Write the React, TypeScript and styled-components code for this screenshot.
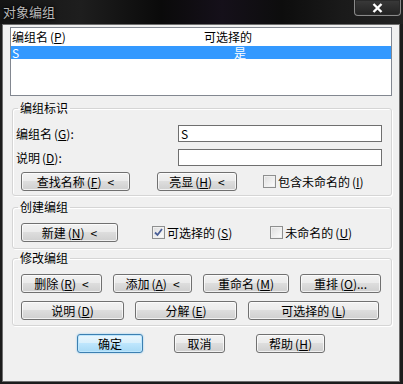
import React from "react"
import styled, { createGlobalStyle, css } from "styled-components"

const Global = createGlobalStyle`
  html, body {
    margin: 0;
    padding: 0;
    background: #000;
  }
  body {
    font-family: "Noto Sans CJK SC", "Noto Sans", sans-serif;
    font-size: 12px;
    color: #000;
  }
`

const Window = styled.div`
  width: 403px;
  height: 384px;
  display: flex;
  flex-direction: column;
  background: #1c1c1c;
  box-sizing: border-box;
  overflow: hidden;
`

const TitleBar = styled.div`
  height: 24px;
  flex: none;
  display: flex;
  align-items: flex-start;
  justify-content: space-between;
  background: linear-gradient(
    to right,
    #141414 0%,
    #1e1e1e 20%,
    #0a0a0a 40%,
    #15101a 55%,
    #0d0d0d 70%,
    #1a1a1a 85%,
    #222 100%
  );
`

const Title = styled.span`
  margin: 3px 0 0 3px;
  font-size: 13px;
  line-height: 18px;
  color: #b8b8b8;
  text-shadow: 0 0 4px #000, 0 0 2px #000;
`

const CloseButton = styled.div`
  width: 45px;
  height: 15px;
  margin-right: 2px;
  border: 1px solid #8a8a8a;
  border-top: none;
  border-radius: 0 0 4px 4px;
  box-shadow: inset 0 0 0 1px #2a2a2a;
  background: linear-gradient(to bottom, #3a3a3a, #222);
  display: flex;
  align-items: center;
  justify-content: center;
`

const Client = styled.div`
  flex: 1;
  margin: 0 3px 2px 2px;
  border: 1px solid #6e6e6e;
  background: #f0f0f0;
  padding: 2px 7px 0 7px;
  display: flex;
  flex-direction: column;
`

const ListBox = styled.div`
  height: 67px;
  border: 1px solid #828790;
  background: #fff;
  display: flex;
  flex-direction: column;
`

const ListRow = styled.div<{ $selected?: boolean; $header?: boolean }>`
  display: grid;
  grid-template-columns: 192px 1fr;
  height: ${(p) => (p.$header ? "18px" : "13px")};
  line-height: ${(p) => (p.$header ? "18px" : "13px")};
  padding-left: 1px;
  ${(p) =>
    p.$selected &&
    css`
      background: #3399ff;
      color: #fff;
    `}
`

const Cell = styled.span<{ $indent?: number }>`
  padding-left: ${(p) => p.$indent ?? 0}px;
  white-space: nowrap;
`

const Group = styled.fieldset<{ $top: number; $bottom: number }>`
  margin: ${(p) => p.$top}px 0 0 2px;
  padding: 0 9px ${(p) => p.$bottom}px 3px;
  border: 1px solid #d5d5d5;
  border-radius: 3px;
  box-shadow: inset 1px 1px 0 #fff, 1px 1px 0 #fff;
  min-width: 0;
`

const Legend = styled.legend`
  margin-left: 2px;
  padding: 0 2px;
  line-height: 14px;
  height: 14px;
`

const FieldRow = styled.div<{ $top: number }>`
  display: grid;
  grid-template-columns: 162px 1fr;
  align-items: center;
  margin-top: ${(p) => p.$top}px;
`

const TextField = styled.div`
  height: 15px;
  border: 1px solid #6f6f6f;
  background: #fff;
  line-height: 15px;
  padding-left: 2px;
`

const ButtonRow = styled.div<{ $top: number; $gap: number; $left?: number; $center?: boolean }>`
  display: flex;
  align-items: center;
  gap: ${(p) => p.$gap}px;
  margin-top: ${(p) => p.$top}px;
  padding-left: ${(p) => p.$left ?? 0}px;
  justify-content: ${(p) => (p.$center ? "center" : "flex-start")};
`

const Button = styled.div<{ $w: number; $default?: boolean }>`
  box-sizing: border-box;
  width: ${(p) => p.$w}px;
  height: 19px;
  flex: none;
  border: 1px solid #707070;
  border-radius: 3px;
  background: linear-gradient(to bottom, #f2f2f2 0%, #ebebeb 45%, #dddddd 50%, #cfcfcf 100%);
  box-shadow: inset 0 0 0 1px rgba(255, 255, 255, 0.7);
  display: flex;
  align-items: center;
  justify-content: center;
  line-height: 17px;
  white-space: nowrap;
  ${(p) =>
    p.$default &&
    css`
      border-color: #3c7fb1;
      background: linear-gradient(to bottom, #eaf6fd 0%, #d9f0fc 45%, #bee6fd 50%, #a7d9f5 100%);
      box-shadow: inset 0 0 0 1px #bde6fd, 0 0 2px #7fc4ef;
    `}
`

const Arrow = styled.span`
  margin-left: 6px;
`

const CheckLabel = styled.label<{ $gapBefore: number }>`
  display: flex;
  align-items: center;
  gap: 2px;
  margin-left: ${(p) => p.$gapBefore}px;
  white-space: nowrap;
`

const Box = styled.span`
  box-sizing: border-box;
  width: 13px;
  height: 13px;
  border: 1px solid #8e8f8f;
  background: linear-gradient(135deg, #dcdcdc 0%, #f4f4f4 70%, #fff 100%);
  box-shadow: inset 0 0 0 1px #f0f0f0;
  display: flex;
  align-items: center;
  justify-content: center;
`

const Key = styled.span`
  margin-left: 2px;
`

const Check = ({ checked, children, gap }: { checked?: boolean; children: React.ReactNode; gap: number }) => (
  <CheckLabel $gapBefore={gap}>
    <Box>
      {checked && (
        <svg width="9" height="9" viewBox="0 0 9 9">
          <path d="M1 4.5 L3.5 7 L8 1" fill="none" stroke="#4a5f97" strokeWidth="1.8" />
        </svg>
      )}
    </Box>
    <span>{children}</span>
  </CheckLabel>
)

const K = ({ k }: { k: string }) => (
  <Key>
    (<u>{k}</u>)
  </Key>
)

export default function App() {
  return (
    <Window>
      <Global />
      <TitleBar>
        <Title>对象编组</Title>
        <CloseButton>
          <svg width="11" height="10" viewBox="0 0 11 10">
            <path d="M1.5 1 L9.5 9 M9.5 1 L1.5 9" stroke="#fff" strokeWidth="2.4" />
          </svg>
        </CloseButton>
      </TitleBar>
      <Client>
        <ListBox>
          <ListRow $header>
            <Cell>
              编组名<K k="P" />
            </Cell>
            <Cell>可选择的</Cell>
          </ListRow>
          <ListRow $selected>
            <Cell>S</Cell>
            <Cell $indent={30}>是</Cell>
          </ListRow>
        </ListBox>

        <Group $top={5} $bottom={4}>
          <Legend>编组标识</Legend>
          <FieldRow $top={10}>
            <span>
              编组名<K k="G" />:
            </span>
            <TextField>S</TextField>
          </FieldRow>
          <FieldRow $top={7}>
            <span>
              说明<K k="D" />:
            </span>
            <TextField />
          </FieldRow>
          <ButtonRow $top={6} $gap={27} $left={5}>
            <Button $w={109}>
              查找名称<K k="F" />
              <Arrow>&lt;</Arrow>
            </Button>
            <Button $w={80}>
              亮显<K k="H" />
              <Arrow>&lt;</Arrow>
            </Button>
            <Check gap={-1}>
              包含未命名的<K k="I" />
            </Check>
          </ButtonRow>
        </Group>

        <Group $top={4} $bottom={6}>
          <Legend>创建编组</Legend>
          <ButtonRow $top={9} $gap={0} $left={5}>
            <Button $w={97}>
              新建<K k="N" />
              <Arrow>&lt;</Arrow>
            </Button>
            <Check checked gap={34}>
              可选择的<K k="S" />
            </Check>
            <Check gap={38}>
              未命名的<K k="U" />
            </Check>
          </ButtonRow>
        </Group>

        <Group $top={2} $bottom={5}>
          <Legend>修改编组</Legend>
          <ButtonRow $top={9} $gap={11} $left={5}>
            <Button $w={81}>
              删除<K k="R" />
              <Arrow>&lt;</Arrow>
            </Button>
            <Button $w={79}>
              添加<K k="A" />
              <Arrow>&lt;</Arrow>
            </Button>
            <Button $w={86}>
              重命名<K k="M" />
            </Button>
            <Button $w={81}>
              重排<K k="O" />...
            </Button>
          </ButtonRow>
          <ButtonRow $top={8} $gap={11} $left={5}>
            <Button $w={103}>
              说明<K k="D" />
            </Button>
            <Button $w={102}>
              分解<K k="E" />
            </Button>
            <Button $w={131}>
              可选择的<K k="L" />
            </Button>
          </ButtonRow>
        </Group>

        <ButtonRow $top={8} $gap={31} $center>
          <Button $w={66} $default>
            确定
          </Button>
          <Button $w={51}>取消</Button>
          <Button $w={69}>
            帮助<K k="H" />
          </Button>
        </ButtonRow>
      </Client>
    </Window>
  )
}
